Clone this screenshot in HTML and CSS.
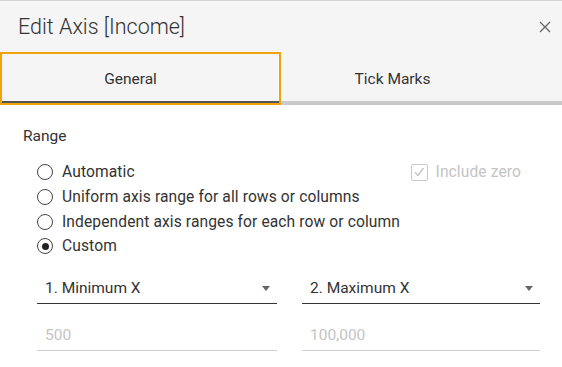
FILE: index.html
```html
<!DOCTYPE html>
<html lang="en">
<head>
  <meta charset="UTF-8">
  <title>Edit Axis [Income]</title>
  <link rel="stylesheet" href="styles.css">
</head>
<body>

  <div class="dialog">
    <header class="dialog-header">
      <h1>Edit Axis [Income]</h1>
      <button class="close-btn" aria-label="Close">
        <svg width="12" height="12" viewBox="0 0 12 12">
          <path d="M1 1 L11 11 M11 1 L1 11" stroke="#666" stroke-width="1.3" fill="none"/>
        </svg>
      </button>
    </header>

    <div class="tabs">
      <button class="tab tab-general active">General</button>
      <button class="tab tab-ticks">Tick Marks</button>
    </div>

    <div class="panel">
      <div class="section-title">Range</div>

      <div class="range-row">
        <div class="radio-list">
          <label class="radio-item"><span class="radio"></span>Automatic</label>
          <label class="radio-item"><span class="radio"></span>Uniform axis range for all rows or columns</label>
          <label class="radio-item"><span class="radio"></span>Independent axis ranges for each row or column</label>
          <label class="radio-item"><span class="radio checked"></span>Custom</label>
        </div>
        <label class="checkbox-item disabled">
          <span class="checkbox">
            <svg width="12" height="12" viewBox="0 0 12 12">
              <path d="M2 6.5 L5 9.5 L10.5 2" stroke="#c4c4c4" stroke-width="1.4" fill="none"/>
            </svg>
          </span>
          Include zero
        </label>
      </div>

      <div class="custom-grid">
        <div class="select-box">
          <span>1. Minimum X</span>
          <span class="caret"></span>
        </div>
        <div class="select-box">
          <span>2. Maximum X</span>
          <span class="caret"></span>
        </div>
        <div class="value-box">500</div>
        <div class="value-box">100,000</div>
      </div>
    </div>
  </div>

</body>
</html>
```

FILE: styles.css
```css
body {
  margin: 0;
  font-family: Roboto, "Liberation Sans", sans-serif;
  background-color: white;
  color: #333;
}

.dialog {
  width: 562px;
  height: 367px;
  overflow: hidden;
}

.dialog-header {
  background-color: #f5f5f5;
  border-top: 1px solid #d4d4d4;
  height: 51px;
  display: flex;
  justify-content: space-between;
  align-items: center;
  padding: 0 11px 0 18px;
}

.dialog-header h1 {
  margin: 0;
  font-size: 21.5px;
  font-weight: 300;
  color: #333;
  padding-bottom: 1px;
}

.close-btn {
  background: transparent;
  border: none;
  padding: 0;
  width: 12px;
  height: 12px;
  cursor: pointer;
  display: flex;
}

.tabs {
  display: flex;
  background-color: #f5f5f5;
}

.tab {
  flex: none;
  width: 50%;
  box-sizing: border-box;
  height: 53px;
  background-color: #f5f5f5;
  border: none;
  border-bottom: 4px solid #c9c9c9;
  font-family: inherit;
  font-size: 15.5px;
  color: #333;
  padding: 5px 0 0;
  cursor: pointer;
}

.tab-general {
  padding-right: 20px;
}

.tab-ticks {
  padding-right: 58px;
}

.tab.active {
  border-bottom-color: #555;
  outline: 2px solid #f0a30a;
  outline-offset: -2px;
}

.panel {
  padding: 22px 22px 0 23px;
}

.section-title {
  font-size: 15.5px;
  line-height: 18px;
}

.range-row {
  display: flex;
  justify-content: space-between;
  margin-top: 15px;
  padding-left: 14px;
}

.radio-list {
  display: flex;
  flex-direction: column;
}

.radio-item {
  display: flex;
  align-items: center;
  gap: 9px;
  font-size: 15.6px;
  letter-spacing: 0.1px;
  height: 24.7px;
}

.radio {
  width: 14px;
  height: 14px;
  border: 1.3px solid #444;
  border-radius: 50%;
  display: flex;
  align-items: center;
  justify-content: center;
  background: white;
}

.radio.checked::after {
  content: "";
  width: 7px;
  height: 7px;
  border-radius: 50%;
  background-color: #222;
}

.checkbox-item {
  display: flex;
  align-items: center;
  gap: 8px;
  height: 24.7px;
  font-size: 15.6px;
  letter-spacing: 0.1px;
  color: #c4c4c4;
  margin-right: 19px;
}

.checkbox {
  width: 15px;
  height: 15px;
  border: 1px solid #c9c9c9;
  border-radius: 2px;
  display: flex;
  align-items: center;
  justify-content: center;
}

.custom-grid {
  display: grid;
  grid-template-columns: 240px 238px;
  column-gap: 25px;
  row-gap: 12px;
  margin-top: 15px;
  padding-left: 14px;
}

.select-box {
  display: flex;
  justify-content: space-between;
  align-items: center;
  height: 29px;
  padding: 0 7px 0 8px;
  border-bottom: 1.5px solid #333;
  font-size: 15.5px;
  color: #333;
}

.caret {
  width: 0;
  height: 0;
  border-left: 4px solid transparent;
  border-right: 4px solid transparent;
  border-top: 5px solid #666;
}

.value-box {
  height: 35px;
  box-sizing: border-box;
  display: flex;
  align-items: center;
  padding: 4px 0 0 8px;
  border-bottom: 1px solid #d0d0d0;
  font-size: 15.5px;
  color: #c4c4c4;
}
```
